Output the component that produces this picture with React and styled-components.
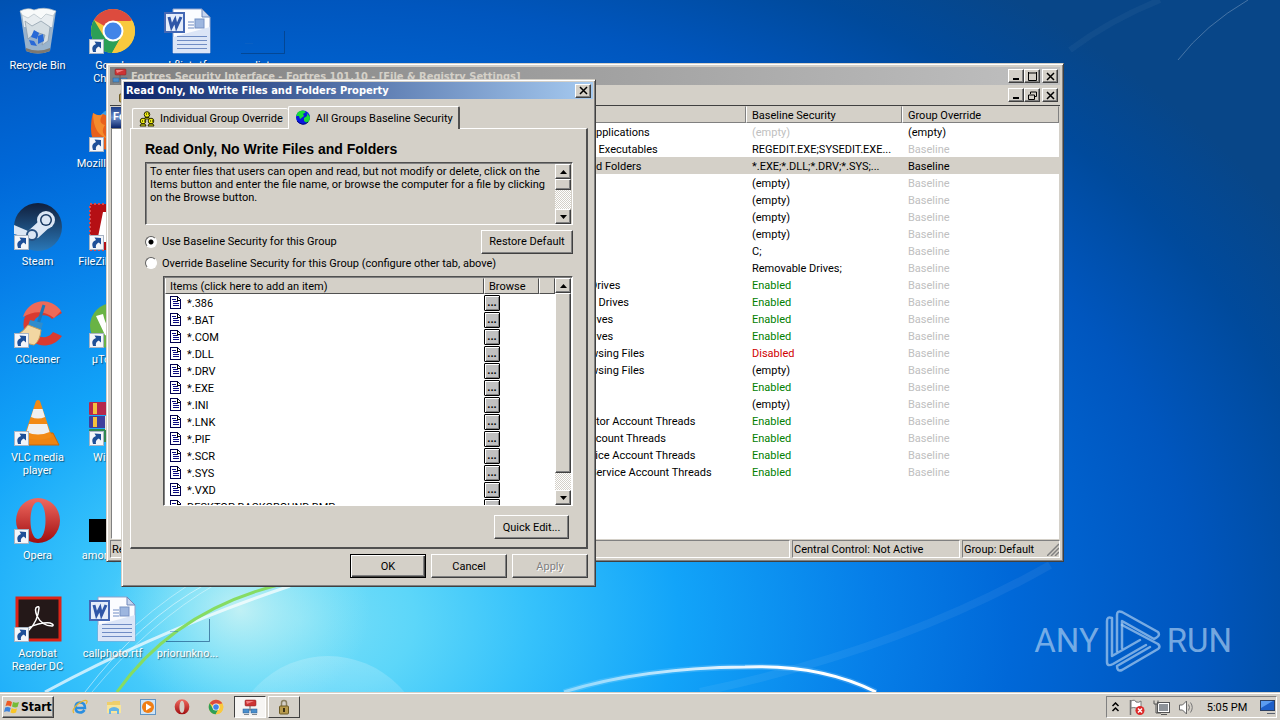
import { useState } from "react";
import styled, { createGlobalStyle, css } from "styled-components";

const GlobalStyle = createGlobalStyle`
    * {
        box-sizing: border-box;
    }
    body {
        margin: 0;
        overflow: hidden;
        font-family: Roboto, "DejaVu Sans Condensed", sans-serif;
        font-size: 11px;
        line-height: 13px;
        color: #000;
    }
    button, input {
        font: inherit;
        color: inherit;
    }
`;

const face = "#d4d0c8";

const raised = css`
    border: 1px solid;
    border-color: #fff #404040 #404040 #fff;
    box-shadow: inset -1px -1px 0 #808080;
`;

const sunken = css`
    border: 1px solid;
    border-color: #808080 #fff #fff #808080;
`;

const Screen = styled.div`
    height: 100vh;
    display: flex;
    flex-direction: column;
    overflow: hidden;
    background: #0058c4;
`;

const Desktop = styled.main`
    position: relative;
    flex: 1;
    min-height: 0;
    overflow: hidden;
`;

const WallpaperSvg = styled.svg`
    position: absolute;
    inset: 0;
    width: 100%;
    height: 100%;
`;

const IconGrid = styled.div`
    position: relative;
    display: grid;
    grid-template-columns: repeat(4, 75px);
    grid-template-rows: repeat(7, 98px);
`;

const IconCell = styled.div`
    grid-column: ${(p) => p.$col};
    grid-row: ${(p) => p.$row};
    display: flex;
    flex-direction: column;
    align-items: center;
    gap: 4px;
    padding-top: 7px;
    color: #fff;
    text-align: center;
    text-shadow: 1px 1px 1px rgba(0, 0, 0, 0.5);
`;

const IconArt = styled.div`
    position: relative;
    width: 48px;
    height: 48px;
    svg {
        display: block;
    }
`;

const ShortcutBadge = styled.svg`
    position: absolute;
    left: 0;
    bottom: 1px;
`;

const Window = styled.section`
    position: absolute;
    display: flex;
    flex-direction: column;
    background: ${face};
    border: 1px solid;
    border-color: ${face} #404040 #404040 ${face};
    box-shadow: inset 1px 1px 0 #fff, inset -1px -1px 0 #808080;
    padding: 3px;
`;

const MainWindow = styled(Window)`
    left: 106px;
    top: 63px;
    width: 958px;
    height: 499px;
`;

const Dialog = styled(Window)`
    left: 121px;
    top: 79px;
    width: 475px;
    height: 508px;
    padding: 2px;
`;

const TitleBar = styled.div`
    display: flex;
    align-items: center;
    height: 18px;
    padding: 0 2px;
    gap: 3px;
    font-family: "DejaVu Sans Condensed", "DejaVu Sans", sans-serif;
    font-size: 11px;
    font-weight: bold;
    white-space: nowrap;
    color: ${(p) => (p.$active ? "#fff" : face)};
    background: ${(p) =>
        p.$active
            ? "linear-gradient(90deg, #0a246a, #a6caf0)"
            : "linear-gradient(90deg, #808080, #c0c0c0)"};
`;

const TitleText = styled.span`
    flex: 1;
`;

const MenuBar = styled.div`
    display: flex;
    align-items: center;
    justify-content: space-between;
    height: 20px;
    padding: 0 2px 0 6px;
`;

const CaptionButtons = styled.div`
    display: flex;
`;

const CaptionButton = styled.button`
    ${raised}
    display: flex;
    align-items: center;
    justify-content: center;
    width: 16px;
    height: 14px;
    margin-left: ${(p) => (p.$gap ? 2 : 0)}px;
    padding: 0;
    background: ${face};
`;

const MainBody = styled.div`
    flex: 1;
    min-height: 0;
    display: flex;
    border-top: 1px solid #404040;
`;

const TreePane = styled.div`
    flex: none;
    width: 468px;
    display: flex;
    flex-direction: column;
    padding: 1px 1px 0;
`;

const TreeCaption = styled.div`
    height: 21px;
    padding: 3px 2px;
    font-weight: bold;
    color: #fff;
    background: linear-gradient(#1b3c86, #6c8cc8 50%, #0a246a);
`;

const Tree = styled.div`
    ${sunken}
    flex: 1;
    background: #fff;
`;

const ListPane = styled.div`
    flex: 1;
    min-width: 0;
    background: #fff;
    border-right: 1px solid ${face};
`;

const SecurityTable = styled.table`
    width: 100%;
    table-layout: fixed;
    border-collapse: separate;
    border-spacing: 0;
`;

const SecurityHead = styled.th`
    width: ${(p) => p.$width};
    height: 17px;
    padding: 2px 5px 0;
    text-align: left;
    font-weight: normal;
    background: ${face};
    border: 1px solid;
    border-color: ${face} #808080 #808080 #fff;
`;

const SecurityRow = styled.tr`
    height: 17px;
    background: ${(p) => (p.$selected ? face : "#fff")};
`;

const tones = {
    on: "#008000",
    off: "#d00000",
    dim: "#c0c0c0",
    plain: "#000",
};

const SecurityCell = styled.td`
    height: 17px;
    padding: 2px 6px 0;
    overflow: hidden;
    white-space: pre;
    color: ${(p) => tones[p.$tone || "plain"]};
`;

const NameCell = styled(SecurityCell)`
    padding-left: 12px;
`;

const StatusBar = styled.footer`
    display: flex;
    gap: 2px;
    height: 19px;
    padding-top: 1px;
`;

const StatusPanel = styled.div`
    ${sunken}
    display: flex;
    align-items: center;
    justify-content: space-between;
    flex: ${(p) => (p.$width ? "none" : 1)};
    width: ${(p) => p.$width || "auto"};
    padding-left: 1px;
    white-space: nowrap;
`;

const DialogBody = styled.div`
    flex: 1;
    display: flex;
    flex-direction: column;
    padding: 7px 5px 6px 6px;
`;

const TabList = styled.div`
    display: flex;
    align-items: flex-end;
    height: 22px;
    padding-left: 2px;
`;

const Tab = styled.button`
    position: relative;
    z-index: ${(p) => (p.$active ? 2 : 0)};
    display: flex;
    align-items: center;
    gap: 5px;
    height: ${(p) => (p.$active ? 23 : 20)}px;
    margin-bottom: ${(p) => (p.$active ? -1 : 0)}px;
    padding: 0 5px 0 6px;
    background: ${face};
    border: solid;
    border-width: 1px ${(p) => (p.$active ? 2 : 0)}px 0 1px;
    border-color: #fff #505050 #fff #fff;
    border-radius: 2px 2px 0 0;
    white-space: nowrap;
`;

const TabPage = styled.div`
    flex: 1;
    display: flex;
    flex-direction: column;
    padding: 12px 13px 8px 14px;
    border: solid;
    border-width: 1px 2px 2px 1px;
    border-color: #fff #505050 #505050 #fff;
`;

const Heading = styled.h1`
    margin: 0;
    font-family: "Liberation Sans", Arial, sans-serif;
    font-size: 14px;
    line-height: 16px;
    font-weight: bold;
    white-space: nowrap;
`;

const Memo = styled.div`
    display: flex;
    height: 63px;
    margin-top: 5px;
    padding-right: 1px;
    border: 1px solid;
    border-color: #505050 #fff #fff #505050;
    box-shadow: inset 1px 1px 0 #808080;
    p {
        flex: 1;
        min-width: 0;
        margin: 0;
        padding: 2px 4px;
        white-space: nowrap;
    }
`;

const ScrollTrack = styled.div`
    display: flex;
    flex-direction: column;
    flex: none;
    width: 16px;
    margin-top: 1px;
    background: repeating-conic-gradient(${face} 0 25%, #fff 0 50%) 0 0 / 2px 2px;
`;

const ScrollButton = styled.button`
    ${raised}
    flex: none;
    display: flex;
    align-items: center;
    justify-content: center;
    width: 16px;
    height: 15px;
    padding: 0;
    background: ${face};
`;

const ScrollThumb = styled.div`
    ${raised}
    height: ${(p) => p.$size}px;
    background: ${face};
`;

const ScrollGap = styled.div`
    flex: 1;
`;

const Choices = styled.div`
    padding: 1px 0 7px;
`;

const ChoiceRow = styled.div`
    display: flex;
    align-items: center;
    justify-content: space-between;
    height: ${(p) => p.$height}px;
`;

const RadioLabel = styled.label`
    display: flex;
    align-items: center;
    gap: 5px;
`;

const Radio = styled.input`
    appearance: none;
    width: 12px;
    height: 12px;
    margin: 0;
    border: 1px solid;
    border-color: #606060 #fff #fff #606060;
    border-radius: 50%;
    background: #fff;
    &:checked {
        background: radial-gradient(circle, #000 2px, #fff 3px);
    }
`;

const PushButton = styled.button`
    ${raised}
    width: ${(p) => p.$width}px;
    height: 24px;
    padding: 0;
    background: ${face};
    white-space: nowrap;
    ${(p) =>
        p.$primary &&
        css`
            border-color: #000;
            box-shadow: inset 1px 1px 0 #fff, inset -1px -1px 0 #404040, inset -2px -2px 0 #808080;
        `}
    &:disabled {
        color: #808080;
        text-shadow: 1px 1px 0 #fff;
    }
`;

const ItemsBox = styled.div`
    display: flex;
    flex: none;
    height: 230px;
    margin-left: 18px;
    padding-right: 1px;
    border: 1px solid;
    border-color: #505050 #fff #fff #505050;
    box-shadow: inset 1px 1px 0 #808080;
    background: #fff;
`;

const ItemsScroll = styled.div`
    flex: 1;
    overflow: hidden;
    padding: 1px 0 0 1px;
`;

const ItemsTable = styled.table`
    width: 100%;
    table-layout: fixed;
    border-collapse: separate;
    border-spacing: 0;
    td {
        height: 17px;
        padding: 0 0 0 5px;
        vertical-align: middle;
    }
    td + td {
        padding: 0;
    }
`;

const ItemsHead = styled.th`
    width: ${(p) => p.$width};
    height: 16px;
    padding: 1px 4px 0;
    text-align: left;
    font-weight: normal;
    background: ${face};
    border: solid;
    border-width: 1px;
    border-color: ${face} #505050 #505050 #fff;
`;

const ItemName = styled.div`
    display: flex;
    align-items: center;
    gap: 5px;
    height: 17px;
    white-space: nowrap;
    span {
        padding-top: 1px;
    }
`;

const BrowseButton = styled.button`
    display: block;
    width: 16px;
    height: 16px;
    padding: 0;
    font-weight: bold;
    line-height: 13px;
    background: #c0c0c0;
    border: 1px solid #000;
    border-radius: 1px;
    box-shadow: inset 1px 1px 0 #fff, inset -1px -1px 0 #808080;
`;

const EditRow = styled.div`
    display: flex;
    justify-content: flex-end;
    padding: 9px 4px 0 0;
`;

const ButtonRow = styled.div`
    display: flex;
    justify-content: flex-end;
    gap: 5px;
    padding-top: 5px;
`;

const Watermark = styled.div`
    position: absolute;
    right: 48px;
    bottom: 20px;
    display: flex;
    align-items: center;
    gap: 5px;
    font-family: Roboto, sans-serif;
    font-size: 33px;
    line-height: 62px;
    color: rgba(170, 205, 240, 0.7);
`;

const Taskbar = styled.footer`
    position: relative;
    flex: none;
    display: flex;
    align-items: center;
    height: 28px;
    padding: 2px 3px 0 2px;
    background: ${face};
    box-shadow: inset 0 1px 0 ${face}, inset 0 2px 0 #fff;
`;

const StartButton = styled.button`
    ${raised}
    display: flex;
    align-items: center;
    gap: 1px;
    width: 52px;
    height: 22px;
    padding: 0 1px;
    font-family: "DejaVu Sans Condensed", sans-serif;
    font-size: 12px;
    font-weight: bold;
    background: ${face};
`;

const QuickLaunch = styled.nav`
    display: flex;
    flex: 1;
    gap: 18px;
    padding-left: 18px;
    button {
        display: flex;
        padding: 0;
        border: 0;
        background: none;
    }
`;

const TaskButtons = styled.div`
    display: flex;
    gap: 2px;
    margin: -3px 0 -3px -8px;
`;

const TaskButton = styled.span`
    display: flex;
    align-items: center;
    justify-content: center;
    width: 32px;
    height: 22px;
    border: 1px solid;
    border-color: ${(p) => (p.$pressed ? "#404040 #fff #fff #404040" : "#fff #404040 #404040 #fff")};
    background: ${(p) => (p.$pressed ? "#f6f5f3" : face)};
`;

const Tray = styled.div`
    ${sunken}
    display: flex;
    align-items: center;
    gap: 8px;
    width: 171px;
    height: 22px;
    padding: 0 0 0 4px;
`;

const Clock = styled.time`
    flex: 1;
    text-align: center;
    white-space: nowrap;
`;

/* ---------- drawings ---------- */

const Wallpaper = () => (
    <WallpaperSvg viewBox="0 0 1280 692" preserveAspectRatio="none" aria-hidden="true">
        <defs>
            <radialGradient id="sky" gradientUnits="userSpaceOnUse" cx="0" cy="0" r="1150" gradientTransform="translate(300 620) scale(1 .69)">
                <stop offset="0" stopColor="#7adff8" />
                <stop offset=".1" stopColor="#5cd6f9" />
                <stop offset=".2" stopColor="#36c2fb" />
                <stop offset=".33" stopColor="#12a4f9" />
                <stop offset=".5" stopColor="#067ee8" />
                <stop offset=".62" stopColor="#0068d8" />
                <stop offset=".78" stopColor="#0056be" />
                <stop offset=".9" stopColor="#004a9c" />
                <stop offset="1" stopColor="#084688" />
            </radialGradient>
            <radialGradient id="glow">
                <stop offset="0" stopColor="#d6f6f4" stopOpacity=".8" />
                <stop offset="1" stopColor="#9cecf6" stopOpacity="0" />
            </radialGradient>
            <linearGradient id="arc">
                <stop offset="0" stopColor="#fff" stopOpacity=".4" />
                <stop offset=".7" stopColor="#fff" />
            </linearGradient>
            <linearGradient id="bubble" x2="0" y2="1">
                <stop offset="0" stopColor="#fff" stopOpacity=".2" />
                <stop offset=".5" stopColor="#fff" stopOpacity="0" />
            </linearGradient>
        </defs>
        <rect width="1280" height="692" fill="url(#sky)" />
        <ellipse cx="240" cy="610" rx="130" ry="110" fill="url(#glow)" />
        <circle cx="328" cy="755" r="99" fill="url(#bubble)" />
        <g fill="none" stroke="#fff">
            <path d="M45 692 Q160 630 290 586" strokeWidth="3" opacity=".7" />
            <path d="M85 692 Q140 620 206 584" opacity=".5" />
            <path d="M92 692 Q150 622 216 584" opacity=".4" />
            <path d="M120 640 Q150 610 190 584" opacity=".4" />
            <path d="M700 692 Q900 650 1050 565" strokeWidth="8" opacity=".06" />
            <path d="M1178 60 Q1205 25 1248 0" opacity=".25" />
            <path d="M1070 50 Q1110 20 1160 0" strokeWidth="6" opacity=".04" />
        </g>
        <path d="M117 692 Q175 610 282 584" fill="none" stroke="#86dc62" strokeWidth="3" />
        <path d="M564 692 Q640 668 745 667 Q820 664 876 692" fill="none" stroke="#bfe8ff" strokeWidth="6" opacity=".2" />
        <path d="M564 692 Q640 668 745 667 Q820 664 876 692" fill="none" stroke="url(#arc)" strokeWidth="3" />
    </WallpaperSvg>
);

const Shortcut = () => (
    <ShortcutBadge width="15" height="15" viewBox="0 0 15 15">
        <rect x=".5" y=".5" width="14" height="14" fill="#f4f6fa" stroke="#a8b4c4" />
        <path d="M4 13 Q1.500 7 7 5 L5.500 2.500 L12 3 L12 9.500 L9.800 7.500 Q6 9 7 13z" fill="#1e4f98" />
    </ShortcutBadge>
);

const RecycleArt = () => (
    <svg width="48" height="48" viewBox="0 0 48 48">
        <path d="M6 4 L42 4 L36 44 Q24 49 12 44z" fill="#a9bccd" opacity=".9" />
        <path d="M8 6 L40 6 L38 20 L10 20z" fill="#e8edf0" />
        <path d="M6 4 Q14 0 20 3 Q30 -1 42 4 L39 9 L32 7 L27 12 L20 7 L14 11 L8 8z" fill="#f8fafa" stroke="#b3bfc6" strokeWidth=".7" />
        <path d="M11 14 L18 19 L27 14 L36 20 L34 34 L28 38 L31 28 L22 25 L14 32z" fill="#d4dde2" stroke="#8698a6" strokeWidth=".7" />
        <path d="M17 30 l3-7 5 3 -2 6z M24 29 l5-2 1 7 -6 3z M15 33 l5 1 3 5 -6-1z" fill="#2869d6" />
        <path d="M12 41 Q24 46 36 41 L36 44 Q24 49 12 44z" fill="#7d7870" />
    </svg>
);

const ChromeArt = ({ size = 48 }) => (
    <svg width={size} height={size} viewBox="0 0 48 48">
        <circle cx="24" cy="24" r="22" fill="#f9c93e" />
        <path d="M24 24 L5 13 A22 22 0 0 1 43 13z" fill="#dd4b3e" />
        <path d="M5 13 A22 22 0 0 0 23 46 L33 28 L24 24 L14 28z" fill="#2c9f57" />
        <path d="M43.500 14 L24 14 L33 29 L23 46 A22 22 0 0 0 43.500 14" fill="#f9c93e" />
        <circle cx="24" cy="24" r="10.500" fill="#fff" />
        <circle cx="24" cy="24" r="8.500" fill="#4285e8" />
    </svg>
);

const WordArt = () => (
    <svg width="48" height="48" viewBox="0 0 48 48">
        <path d="M9 2 H38 L46 10 V46 H9z" fill="#fbfcff" stroke="#8fa3cc" />
        <path d="M9 30 L46 20 V46 H9z" fill="#dbe5f7" />
        <path d="M38 2 V10 H46z" fill="#c6d4ee" stroke="#6f87b8" />
        <path d="M24 15 h6 M24 18 h6 M24 21 h6 M13 29.500 h30 M13 33.500 h30 M13 37.500 h30 M13 41.500 h30" stroke="#6f8cc4" />
        <rect x="31" y="12" width="9" height="9" fill="#9db6df" stroke="#7791c4" />
        <rect x="1" y="6" width="19" height="19" fill="#e4ecfa" stroke="#4468b4" strokeWidth="2" />
        <path d="M5 10 L7.500 20 L11 13 L12.500 20 L17 10" fill="none" stroke="#2f56a8" strokeWidth="3" />
    </svg>
);

const FirefoxArt = () => (
    <svg width="48" height="48" viewBox="0 0 48 48">
        <circle cx="27" cy="23" r="20" fill="#3a9fe6" />
        <path d="M4 8 Q10 12 14 9 Q20 10 18 18 Q28 20 24 27 Q35 40 46 20 Q46 46 24 46 Q2 44 2 24 Q2 14 4 8z" fill="#e8601c" />
        <path d="M4 8 Q10 12 14 9 Q8 18 16 20 Q10 28 20 34 Q4 30 4 8z" fill="#f58b2c" />
    </svg>
);

const SteamArt = () => (
    <svg width="48" height="48" viewBox="0 0 48 48">
        <defs>
            <linearGradient id="steam" x2="0" y2="1">
                <stop offset="0" stopColor="#101f3c" />
                <stop offset="1" stopColor="#2a78b8" />
            </linearGradient>
        </defs>
        <circle cx="24" cy="24" r="24" fill="url(#steam)" />
        <path d="M0 22 L14 28 L24 19 L38 17 L37 23 L24 35 L18 36 L0 31z" fill="#dbe6f4" />
        <circle cx="32" cy="17" r="9" fill="#dbe6f4" />
        <circle cx="32" cy="17" r="6" fill="#16365f" />
        <circle cx="32" cy="17" r="4.500" fill="#dbe6f4" />
        <circle cx="18" cy="32" r="5" fill="#dbe6f4" stroke="#274f80" strokeWidth="2" />
    </svg>
);

const FileZillaArt = () => (
    <svg width="48" height="48" viewBox="0 0 48 48">
        <rect x="1" y="1" width="46" height="46" fill="#b50f14" stroke="#d8484c" strokeWidth="2" strokeDasharray="2 2" />
        <path d="M8 39 L14 9 H40 L38 15 H24 L22 21 H38 L24 34 H34 V39z" fill="#fff" />
    </svg>
);

const CCleanerArt = () => (
    <svg width="48" height="48" viewBox="0 0 48 48">
        <path d="M48 12 A21 21 0 1 0 48 35 L39 31 A11 11 0 1 1 38 18z" fill="#d93a30" />
        <path d="M47 10 A21 21 0 0 0 9 16 Q26 6 40 17z" fill="#ee6a58" />
        <path d="M30 4 L24 23" stroke="#1f76b8" strokeWidth="3" />
        <path d="M16 19 L29 22 L27 29 L14 25z" fill="#2f8ccc" />
        <path d="M14 24 L27 29 Q26 40 20 44 Q8 42 3 34 Q10 30 14 24z" fill="#f2d7a2" stroke="#c79d5c" />
    </svg>
);

const UTorrentArt = () => (
    <svg width="48" height="48" viewBox="0 0 48 48">
        <circle cx="24" cy="25" r="23" fill="#69b345" />
        <path d="M7 15 L14 13 Q18 30 25 29 Q31 28 28 12 L36 11 L40 30 Q30 42 16 34z" fill="#fff" />
    </svg>
);

const VlcArt = () => (
    <svg width="48" height="48" viewBox="0 0 48 48">
        <path d="M9 34 H39 L45 46 H3z" fill="#ee8411" stroke="#c96506" />
        <path d="M22 2 Q24 0 26 2 L38 38 Q24 44 10 38z" fill="#f28a14" />
        <path d="M19.500 10 H28.500 L31 18 Q24 21 17 18z M15 25 H33 L35.500 33 Q24 38 12.500 33z" fill="#eff0f0" />
    </svg>
);

const WinRarArt = () => (
    <svg width="48" height="48" viewBox="0 0 48 48">
        <rect y="3" width="46" height="13" rx="1" fill="#b5284c" />
        <rect y="17" width="46" height="12" rx="1" fill="#3f3f9e" />
        <rect y="30" width="46" height="13" rx="1" fill="#2f8850" />
        <path d="M4 4 h4 v11 h-4z M4 18 h4 v10 h-4z" fill="#f4c13c" />
        <path d="M16 17 h14 v14 h-14z" fill="#e9e4d8" />
    </svg>
);

const OperaArt = ({ size = 48 }) => (
    <svg width={size} height={size} viewBox="0 0 48 48">
        <defs>
            <linearGradient id="opera" x2="0" y2="1">
                <stop offset="0" stopColor="#f06a60" />
                <stop offset="1" stopColor="#a00d10" />
            </linearGradient>
        </defs>
        <path fillRule="evenodd" d="M24 1 A22 22.500 0 0 1 24 46 A22 22.500 0 0 1 24 1 M24 5 C14 5 14 42 24 42 C34 42 34 5 24 5" fill="url(#opera)" />
    </svg>
);

const BlackArt = () => (
    <svg width="48" height="48" viewBox="0 0 48 48">
        <path d="M0 22 H48 V45 H0z" />
    </svg>
);

const AcrobatArt = () => (
    <svg width="48" height="48" viewBox="0 0 48 48">
        <rect x="3" y="3" width="43" height="42" fill="#241818" stroke="#dc2418" strokeWidth="3" />
        <path d="M23 12 Q20 13 23 21 Q28 31 38 31 Q41 30 36 28 Q27 27 14 33 Q10 37 15 35 Q24 26 25 13 Q25 11 23 12z" fill="none" stroke="#fff" strokeWidth="1.500" />
    </svg>
);

const GhostArt = () => (
    <svg width="48" height="48" viewBox="0 0 48 48">
        <path d="M2 46.500 H45.500 V24" fill="none" stroke="#06346c" opacity=".55" />
        <path d="M6 36.500 h8" stroke="#1b66c0" opacity=".4" />
    </svg>
);

const NetworkIcon = () => (
    <svg width="16" height="16" viewBox="0 0 16 16">
        <path d="M8 6 V11 M3 11 H13" stroke="#606060" />
        <rect x="3" y="1" width="11" height="6" rx="1" fill="#cc3434" stroke="#872020" strokeWidth=".5" />
        <path d="M4 2 h8 l-7 3z" fill="#ee8080" />
        <rect x="1" y="10" width="6" height="4" fill="#4a8fcc" stroke="#2c5c90" strokeWidth=".5" />
        <rect x="9" y="10" width="6" height="4" fill="#4a8fcc" stroke="#2c5c90" strokeWidth=".5" />
        <path d="M2 15.500 h5 M10 15.500 h5" stroke="#808890" />
    </svg>
);

const LockIcon = () => (
    <svg width="16" height="16" viewBox="0 0 16 16">
        <path d="M5.500 8 V4 Q5.500 1.500 8 1.500 Q10.500 1.500 10.500 4 V8" fill="none" stroke="#8a8062" strokeWidth="1.500" />
        <rect x="3.500" y="7" width="9" height="8" rx="1" fill="#b79a4c" stroke="#6d5a24" />
        <rect x="7" y="9" width="2" height="4" fill="#3a2f12" />
    </svg>
);

const GroupIcon = () => (
    <svg width="16" height="16" viewBox="0 0 16 16">
        <g fill="#f2ee14" stroke="#2a2a00">
            <circle cx="8" cy="3.500" r="2.800" />
            <path d="M5 8 L6 6.500 H10 L11 8z" />
            <circle cx="4" cy="10" r="2.800" />
            <path d="M1 15 L2 13 H6 L7 15z" />
            <circle cx="12" cy="10" r="2.800" />
            <path d="M9 15 L10 13 H14 L15 15z" />
        </g>
        <path d="M7 3h1 M9 3h1 M3 10h1 M5 10h1 M11 10h1 M13 10h1" stroke="#000" />
    </svg>
);

const GlobeIcon = () => (
    <svg width="16" height="16" viewBox="0 0 16 16">
        <circle cx="8" cy="7.500" r="7" fill="#0a18e0" />
        <path d="M3 2 Q8 -1 11 2 L8 4 L9 6 L5 9 L4 6 L1 6z M9 8 L12 6 L12 3 L15 7 Q15 11 12 13 L9 11z" fill="#18dc38" />
        <path d="M2 11 Q8 17 13 12" fill="none" stroke="#060a78" />
    </svg>
);

const DocIcon = () => (
    <svg width="12" height="14" viewBox="0 0 12 14" shapeRendering="crispEdges">
        <path d="M.5 .5 H7.500 L10.500 3.500 V12.500 H.5z" fill="#fff" stroke="#000050" />
        <path d="M7 1 V4 H10" fill="none" stroke="#000" />
        <path d="M2 3.500 h4 M3 5.500 h5 M3 7.500 h6 M3 9.500 h6" stroke="#0b0b80" />
    </svg>
);

const Arrow = ({ down }) => (
    <svg width="7" height="4" viewBox="0 0 7 4">
        <path d={down ? "M0 0 H7 L3.500 4z" : "M0 4 H7 L3.500 0z"} />
    </svg>
);

const glyphs = {
    min: <path d="M1 7 H7" strokeWidth="2" />,
    max: <path d="M.5 1 H8.500 M.5 0 V8.500 H8.500 V0" />,
    restore: <path d="M2.500 3 V1 H8.500 V5.500 H6 M.5 4 H6.500 M.5 4 V8.500 H6.500 V4" />,
    close: <path d="M1 1 L8 8 M8 1 L1 8" strokeWidth="1.500" />,
};

const Glyph = ({ kind }) => (
    <svg width="9" height="9" viewBox="0 0 9 9" fill="none" stroke="#000">
        {glyphs[kind]}
    </svg>
);

const StartFlag = () => (
    <svg width="16" height="16" viewBox="0 0 16 16">
        <path d="M3 2 Q5 1 8 3 L7 7.500 Q4 6 1.500 7z" fill="#ee5a24" />
        <path d="M9 3 Q12 4.500 15 3 L13.500 8 Q11 9 8 7.500z" fill="#76bc36" />
        <path d="M1.200 8.500 Q4 7.500 6.700 9 L5.500 13 Q3 11.500 0 13z" fill="#3d83dc" />
        <path d="M7.700 9 Q10 10.500 13 9.500 L12 13.500 Q9 15 6.500 13.500z" fill="#f8c526" />
    </svg>
);

const IeIcon = () => (
    <svg width="16" height="16" viewBox="0 0 16 16" fill="none">
        <path d="M3 9 H13 Q13 3.500 8 3.500 Q3.500 3.500 3.500 8.500 Q3.500 13.500 8 13.500 Q11 13.500 12.500 11" stroke="#2a8ee0" strokeWidth="2.500" />
        <path d="M2 14 Q-1 11 6 5 Q13 0 15 2 Q15.500 3 14 5" stroke="#eab62c" strokeWidth="1.200" />
    </svg>
);

const FolderIcon = () => (
    <svg width="16" height="16" viewBox="0 0 16 16">
        <path d="M1 3 H6 L7 2 H14 V13 H1z" fill="#efcf6a" />
        <path d="M1 6 H15 V14 H1z" fill="#f8e59a" />
        <path d="M3 15 V10 Q8 6 13 10 V15 H11 V12 H5 V15z" fill="#64b4e6" />
    </svg>
);

const MediaIcon = () => (
    <svg width="16" height="16" viewBox="0 0 16 16">
        <rect x=".5" y=".5" width="15" height="15" fill="#cfe4f6" stroke="#5f94c4" />
        <circle cx="8" cy="8" r="6" fill="#f07e14" />
        <path d="M6 4.500 L11.500 8 L6 11.500z" fill="#fff" />
    </svg>
);

const FlagIcon = () => (
    <svg width="17" height="17" viewBox="0 0 17 17">
        <path d="M2.500 1 V16" stroke="#707070" strokeWidth="1.500" />
        <path d="M3 2 Q7 0 8 3 Q11 4 13 2 V9 Q10 11 8 9 Q6 8 3 9z" fill="#fff" stroke="#777" />
        <circle cx="12" cy="11.500" r="4.500" fill="#dc2828" />
        <path d="M10 9.500 L14 13.500 M14 9.500 L10 13.500" stroke="#fff" strokeWidth="1.500" />
    </svg>
);

const LanIcon = () => (
    <svg width="17" height="17" viewBox="0 0 17 17">
        <rect x="5.500" y="4.500" width="10" height="8" fill="#8d9298" stroke="#fff" />
        <rect x="4.500" y="3.500" width="12" height="10" fill="none" stroke="#555" />
        <path d="M8 15.500 H14" stroke="#555" />
        <path d="M1 1.500 V5 H5 V1.500 M3 5 V14 H8" fill="none" stroke="#555" />
    </svg>
);

const SpeakerIcon = () => (
    <svg width="17" height="17" viewBox="0 0 17 17">
        <path d="M1.500 6 H4.500 L8.500 2 V15 L4.500 11 H1.500z" fill="#fff" stroke="#666" />
        <path d="M10.500 5.500 Q12.500 8.500 10.500 11.500 M12.500 3.500 Q16 8.500 12.500 13.500" fill="none" stroke="#777" />
    </svg>
);

const ShowDesktopIcon = () => (
    <svg width="17" height="16" viewBox="0 0 17 16">
        <rect x="1.500" y="1.500" width="14" height="10" fill="#1d5fc8" stroke="#2b3f62" />
        <path d="M2 2 H14 L2 9z" fill="#5b9cf0" />
        <path d="M8 14.500 h8" stroke="#5a6270" />
    </svg>
);

const PlayMark = () => (
    <svg width="58" height="62" viewBox="0 0 58 62" fill="none" stroke="currentColor" strokeWidth="2.500" strokeLinejoin="round" strokeLinecap="round">
        <path d="M8 8 Q3 6 3 11 V52 Q3 57 9 54 L42 35 M8 8 V46 L36 30" />
        <path d="M13 41 V5 Q13 0 18 2 L54 22 Q57 26 50 29 L18 11 V38" />
        <path d="M18 15 L54 34 Q57 37 54 39 L18 60 Q13 62 13 56 L46 37" />
    </svg>
);

/* ---------- data ---------- */

const desktopIcons = [
    { col: 1, row: 1, label: "Recycle Bin", Art: RecycleArt },
    { col: 1, row: 3, label: "Steam", Art: SteamArt, link: true },
    { col: 1, row: 4, label: "CCleaner", Art: CCleanerArt, link: true },
    { col: 1, row: 5, label: "VLC media player", Art: VlcArt, link: true },
    { col: 1, row: 6, label: "Opera", Art: OperaArt, link: true },
    { col: 1, row: 7, label: "Acrobat Reader DC", Art: AcrobatArt, link: true },
    { col: 2, row: 1, label: "Google Chrome", Art: ChromeArt, link: true },
    { col: 2, row: 2, label: "Mozilla Firefox", Art: FirefoxArt, link: true },
    { col: 2, row: 3, label: "FileZilla Client", Art: FileZillaArt, link: true },
    { col: 2, row: 4, label: "µTorrent", Art: UTorrentArt, link: true },
    { col: 2, row: 5, label: "WinRAR", Art: WinRarArt, link: true },
    { col: 2, row: 6, label: "amongst.jpg", Art: BlackArt },
    { col: 2, row: 7, label: "callphoto.rtf", Art: WordArt },
    { col: 3, row: 1, label: "kflist.rtf", Art: WordArt },
    { col: 3, row: 7, label: "priorunkno...", Art: GhostArt },
    { col: 4, row: 1, label: "list", Art: GhostArt },
];

const securityRows = [
    ["applications", "(empty)", "(empty)", "dim", "plain"],
    ["e Executables", "REGEDIT.EXE;SYSEDIT.EXE..."],
    ["nd Folders", "*.EXE;*.DLL;*.DRV;*.SYS;...", "Baseline", "plain", "plain"],
    ["", "(empty)"],
    ["", "(empty)"],
    ["", "(empty)"],
    ["", "(empty)"],
    ["", "C;"],
    ["", "Removable Drives;"],
    ["Drives", "Enabled", "Baseline", "on"],
    ["e Drives", "Enabled", "Baseline", "on"],
    ["rives", "Enabled", "Baseline", "on"],
    ["rives", "Enabled", "Baseline", "on"],
    ["wsing Files", "Disabled", "Baseline", "off"],
    ["wsing Files", "(empty)"],
    ["n", "Enabled", "Baseline", "on"],
    ["", "(empty)"],
    ["ator Account Threads", "Enabled", "Baseline", "on"],
    ["ccount Threads", "Enabled", "Baseline", "on"],
    ["vice Account Threads", "Enabled", "Baseline", "on"],
    ["Service Account Threads", "Enabled", "Baseline", "on"],
];

const items = [
    "*.386", "*.BAT", "*.COM", "*.DLL", "*.DRV", "*.EXE", "*.INI",
    "*.LNK", "*.PIF", "*.SCR", "*.SYS", "*.VXD", "DESKTOP BACKGROUND.BMP",
];

const ScrollBar = ({ thumb }) => (
    <ScrollTrack>
        <ScrollButton aria-label="Scroll up"><Arrow /></ScrollButton>
        <ScrollThumb $size={thumb} />
        <ScrollGap />
        <ScrollButton aria-label="Scroll down"><Arrow down /></ScrollButton>
    </ScrollTrack>
);

const SecurityWindow = () => (
    <MainWindow>
        <TitleBar>
            <NetworkIcon />
            <TitleText>Fortres Security Interface - Fortres 101.10 - [File &amp; Registry Settings]</TitleText>
            <CaptionButtons>
                <CaptionButton aria-label="Minimize"><Glyph kind="min" /></CaptionButton>
                <CaptionButton aria-label="Maximize"><Glyph kind="max" /></CaptionButton>
                <CaptionButton $gap aria-label="Close"><Glyph kind="close" /></CaptionButton>
            </CaptionButtons>
        </TitleBar>
        <MenuBar>
            <LockIcon />
            <CaptionButtons>
                <CaptionButton aria-label="Minimize document"><Glyph kind="min" /></CaptionButton>
                <CaptionButton aria-label="Restore document"><Glyph kind="restore" /></CaptionButton>
                <CaptionButton $gap aria-label="Close document"><Glyph kind="close" /></CaptionButton>
            </CaptionButtons>
        </MenuBar>
        <MainBody>
            <TreePane>
                <TreeCaption>Fortres 101</TreeCaption>
                <Tree />
            </TreePane>
            <ListPane>
                <SecurityTable>
                    <thead>
                        <tr>
                            <SecurityHead $width="168px" aria-label="Setting" />
                            <SecurityHead $width="156px">Baseline Security</SecurityHead>
                            <SecurityHead>Group Override</SecurityHead>
                        </tr>
                    </thead>
                    <tbody>
                        {securityRows.map(([name, base, group = "Baseline", tone = "plain", groupTone = "dim"], i) => (
                            <SecurityRow key={i} $selected={i === 2}>
                                <NameCell>{name}</NameCell>
                                <SecurityCell $tone={tone}>{base}</SecurityCell>
                                <SecurityCell $tone={groupTone}>{group}</SecurityCell>
                            </SecurityRow>
                        ))}
                    </tbody>
                </SecurityTable>
            </ListPane>
        </MainBody>
        <StatusBar>
            <StatusPanel>Ready</StatusPanel>
            <StatusPanel $width="168px">Central Control: Not Active</StatusPanel>
            <StatusPanel $width="98px">
                Group: Default
                <svg width="12" height="14" viewBox="0 0 12 14">
                    <path d="M0 14 L12 2 M4 14 L12 6 M8 14 L12 10" stroke="#808080" strokeWidth="1.500" />
                </svg>
            </StatusPanel>
        </StatusBar>
    </MainWindow>
);

const PropertyDialog = () => {
    const [mode, setMode] = useState("baseline");

    return (
        <Dialog role="dialog" aria-label="Read Only, No Write Files and Folders Property">
            <TitleBar $active>
                <TitleText>Read Only, No Write Files and Folders Property</TitleText>
                <CaptionButton aria-label="Close"><Glyph kind="close" /></CaptionButton>
            </TitleBar>
            <DialogBody>
                <TabList role="tablist">
                    <Tab role="tab" aria-selected="false"><GroupIcon />Individual Group Override</Tab>
                    <Tab role="tab" aria-selected="true" $active><GlobeIcon />All Groups Baseline Security</Tab>
                </TabList>
                <TabPage>
                    <Heading>Read Only, No Write Files and Folders</Heading>
                    <Memo>
                        <p>
                            To enter files that users can open and read, but not modify or delete, click on the<br />
                            Items button and enter the file name, or browse the computer for a file by clicking<br />
                            on the Browse button.
                        </p>
                        <ScrollBar thumb={11} />
                    </Memo>
                    <Choices>
                        <ChoiceRow $height={31}>
                            <RadioLabel>
                                <Radio type="radio" name="mode" checked={mode === "baseline"} onChange={() => setMode("baseline")} />
                                Use Baseline Security for this Group
                            </RadioLabel>
                            <PushButton $width={92}>Restore Default</PushButton>
                        </ChoiceRow>
                        <ChoiceRow $height={12}>
                            <RadioLabel>
                                <Radio type="radio" name="mode" checked={mode === "override"} onChange={() => setMode("override")} />
                                Override Baseline Security for this Group (configure other tab, above)
                            </RadioLabel>
                        </ChoiceRow>
                    </Choices>
                    <ItemsBox>
                        <ItemsScroll>
                            <ItemsTable>
                                <thead>
                                    <tr>
                                        <ItemsHead $width="auto">Items (click here to add an item)</ItemsHead>
                                        <ItemsHead $width="55px">Browse</ItemsHead>
                                        <ItemsHead $width="16px" aria-label="Spacer" />
                                    </tr>
                                </thead>
                                <tbody>
                                    {items.map((item) => (
                                        <tr key={item}>
                                            <td><ItemName><DocIcon /><span>{item}</span></ItemName></td>
                                            <td><BrowseButton aria-label={`Browse for ${item}`}>...</BrowseButton></td>
                                            <td />
                                        </tr>
                                    ))}
                                </tbody>
                            </ItemsTable>
                        </ItemsScroll>
                        <ScrollBar thumb={180} />
                    </ItemsBox>
                    <EditRow>
                        <PushButton $width={75}>Quick Edit...</PushButton>
                    </EditRow>
                </TabPage>
                <ButtonRow>
                    <PushButton $width={76} $primary>OK</PushButton>
                    <PushButton $width={76}>Cancel</PushButton>
                    <PushButton $width={76} disabled>Apply</PushButton>
                </ButtonRow>
            </DialogBody>
        </Dialog>
    );
};

const App = () => (
    <Screen>
        <GlobalStyle />
        <Desktop>
            <Wallpaper />
            <IconGrid>
                {desktopIcons.map(({ col, row, label, Art, link }) => (
                    <IconCell key={label} $col={col} $row={row}>
                        <IconArt>
                            <Art />
                            {link && <Shortcut />}
                        </IconArt>
                        <span>{label}</span>
                    </IconCell>
                ))}
            </IconGrid>
            <Watermark>
                <span>ANY</span>
                <PlayMark />
                <span>RUN</span>
            </Watermark>
            <SecurityWindow />
            <PropertyDialog />
        </Desktop>
        <Taskbar>
            <StartButton><StartFlag />Start</StartButton>
            <QuickLaunch>
                <button aria-label="Internet Explorer"><IeIcon /></button>
                <button aria-label="Windows Explorer"><FolderIcon /></button>
                <button aria-label="Media Player"><MediaIcon /></button>
                <button aria-label="Opera"><OperaArt size={16} /></button>
                <button aria-label="Chrome"><ChromeArt size={16} /></button>
                <TaskButtons>
                    <button aria-label="Fortres"><TaskButton $pressed><NetworkIcon /></TaskButton></button>
                    <button aria-label="Lock"><TaskButton><LockIcon /></TaskButton></button>
                </TaskButtons>
            </QuickLaunch>
            <Tray>
                <svg width="9" height="10" viewBox="0 0 9 10" fill="none" stroke="#000" strokeWidth="1.500">
                    <path d="M1.500 4 L4.500 1 L7.500 4 M1.500 9 L4.500 6 L7.500 9" />
                </svg>
                <FlagIcon />
                <LanIcon />
                <SpeakerIcon />
                <Clock>5:05 PM</Clock>
                <ShowDesktopIcon />
            </Tray>
        </Taskbar>
    </Screen>
);

export default App;
